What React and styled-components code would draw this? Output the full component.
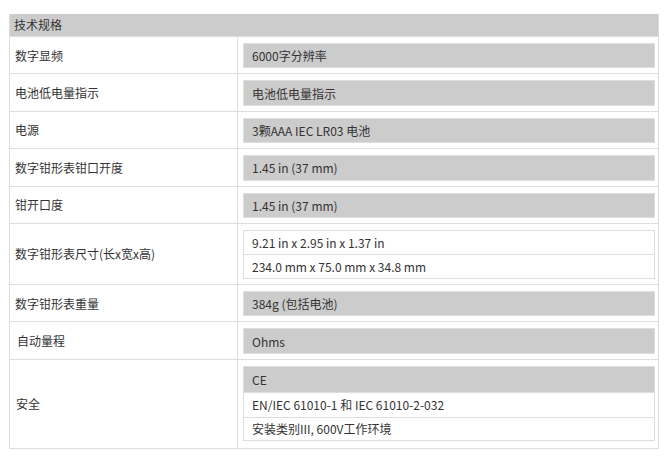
import React from 'react'
import styled, { createGlobalStyle } from 'styled-components';

const GlobalStyle = createGlobalStyle`
    body {
        margin: 0;
        background: #fff;
        font-family: "Noto Sans CJK SC", "Noto Sans", sans-serif;
        font-size: 12px;
        color: #333;
    }
`

const StyledPage = styled.div`
    padding: 14px 7px 0 9px;
`

const StyledTable = styled.div`
    border: 1px solid #ddd;
    border-top: none;
`

const StyledHeader = styled.div`
    height: 22px;
    line-height: 22px;
    padding-left: 4px;
    background: #cccccc;
`

const StyledRow = styled.div`
    display: grid;
    grid-template-columns: 228px 1fr;
    border-top: 1px solid #ddd;
`

const StyledLabel = styled.div`
    display: flex;
    align-items: center;
    padding-left: ${props => props.indent || 5}px;
    border-right: 1px solid #ddd;
`

const StyledValueCell = styled.div`
    padding: ${props => props.pad || '6px 3px 5px 5px'};
`

const StyledValueBox = styled.div`
    box-sizing: border-box;
    height: 25.4px;
    display: flex;
    align-items: center;
    padding-left: 8px;
    background: #cccccc;
    border: 1px solid #dedede;
`

const StyledList = styled.div`
    border: 1px solid #ddd;
`

const StyledListItem = styled.div`
    height: ${props => props.h || 23}px;
    display: flex;
    align-items: center;
    padding-left: 8px;
    background: ${props => props.shaded ? '#cccccc' : '#fff'};
    & + & {
        border-top: 1px solid #ddd;
    }
`

const specs = [
    { label: '数字显频', value: '6000字分辨率' },
    { label: '电池低电量指示', value: '电池低电量指示' },
    { label: '电源', value: '3颗AAA IEC LR03 电池' },
    { label: '数字钳形表钳口开度', value: '1.45 in (37 mm)' },
    { label: '钳开口度', value: '1.45 in (37 mm)' },
    { label: '数字钳形表尺寸(长x宽x高)', list: [
        { text: '9.21 in x 2.95 in x 1.37 in', h: 23 },
        { text: '234.0 mm x 75.0 mm x 34.8 mm', h: 23 },
    ] },
    { label: '数字钳形表重量', value: '384g (包括电池)' },
    { label: '自动量程', value: 'Ohms', indent: 7 },
    { label: '安全', indent: 6, pad: '6px 3px 7px 5px', list: [
        { text: 'CE', h: 25, shaded: true },
        { text: 'EN/IEC 61010-1 和 IEC 61010-2-032', h: 24 },
        { text: '安装类别III, 600V工作环境', h: 22 },
    ] },
]

export default function App() {
    return (
        <StyledPage>
            <GlobalStyle />
            <StyledTable>
                <StyledHeader>技术规格</StyledHeader>
                {specs.map(spec => (
                    <StyledRow key={spec.label}>
                        <StyledLabel indent={spec.indent}>{spec.label}</StyledLabel>
                        <StyledValueCell pad={spec.pad}>
                            {spec.list ? (
                                <StyledList>
                                    {spec.list.map(item => (
                                        <StyledListItem key={item.text} h={item.h} shaded={item.shaded}>{item.text}</StyledListItem>
                                    ))}
                                </StyledList>
                            ) : (
                                <StyledValueBox>{spec.value}</StyledValueBox>
                            )}
                        </StyledValueCell>
                    </StyledRow>
                ))}
            </StyledTable>
        </StyledPage>
    )
}
